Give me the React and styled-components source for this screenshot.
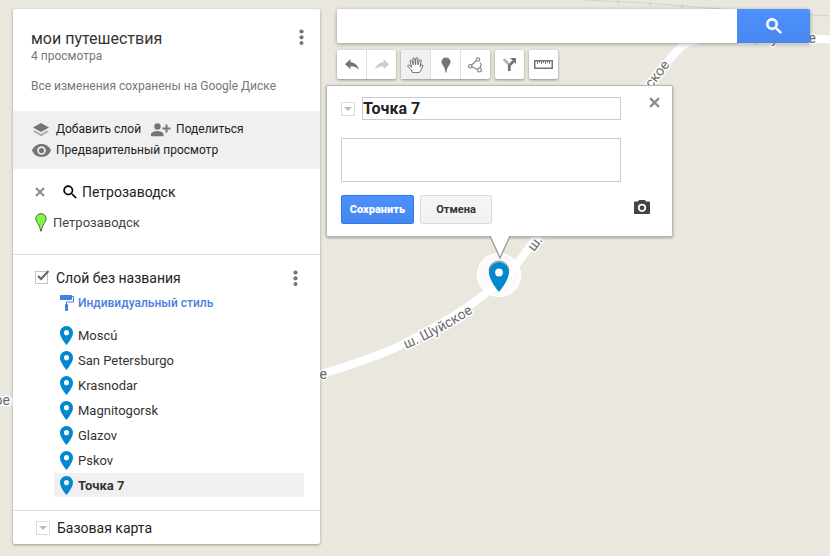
import React, { useState } from "react";
import styled, { createGlobalStyle, css } from "styled-components";

const GlobalStyle = createGlobalStyle`
  * { box-sizing: border-box; }
  body { margin: 0; background: #eae7df; font-family: Roboto, "Noto Sans", sans-serif; color: #222; }
  button, input, textarea { font-family: inherit; margin: 0; }
  button { padding: 0; border: 0; background: none; cursor: pointer; color: inherit; }
  svg { display: block; flex: none; }
`;

const Page = styled.div`
  position: relative;
  display: flex;
  align-items: flex-start;
  gap: 17px;
  min-height: 100vh;
  padding: 9px 20px 12px 13px;
  overflow: hidden;
`;

const MapCanvas = styled.svg`
  position: absolute;
  top: 0;
  left: 0;
`;

const RoadLabel = styled.text`
  font: 14px Roboto, "Noto Sans", sans-serif;
  fill: #6b6b6b;
  stroke: #fff;
  stroke-width: 3px;
  stroke-linejoin: round;
  paint-order: stroke;
`;

const Panel = styled.aside`
  position: relative;
  flex: 0 0 307px;
  background: #fff;
  border-radius: 2px;
  box-shadow: 0 1px 3px rgba(0, 0, 0, 0.35);
`;

const PanelHeader = styled.header`
  display: flex;
  justify-content: space-between;
  align-items: flex-start;
  padding: 20px 12px 18px 18px;
`;

const MapTitle = styled.h1`
  margin: 0;
  font-size: 16px;
  font-weight: 400;
  line-height: 20px;
  color: #333;
`;

const Meta = styled.p`
  margin: 0;
  font-size: 12px;
  line-height: 14px;
  color: #777;
  & + & { margin-top: 16px; }
`;

const MenuButton = styled.button`
  display: grid;
  place-items: center;
  width: 14px;
  height: 16px;
`;

const Actions = styled.div`
  display: flex;
  flex-wrap: wrap;
  column-gap: 10px;
  padding: 8px 18px;
  background: #f0f0f0;
`;

const ActionButton = styled.button`
  display: flex;
  align-items: center;
  gap: 5px;
  height: 21px;
  font-size: 12px;
  line-height: 21px;
  white-space: nowrap;
`;

const IconSlot = styled.span`
  display: grid;
  place-items: center;
  width: 20px;
`;

const Section = styled.section`
  border-bottom: 1px solid #e0e0e0;
  padding: ${(p) => p.$pad};
`;

const Row = styled.div`
  display: flex;
  align-items: center;
  gap: ${(p) => p.$gap}px;
  height: 20px;
`;

const SearchRow = styled(Row)`
  height: 24px;
  margin-bottom: 8px;
`;

const Query = styled.span`
  display: flex;
  align-items: center;
  gap: 5px;
  font-size: 14px;
`;

const ResultName = styled.span`
  font-size: 13px;
  color: #444;
`;

const LayerHead = styled.div`
  display: flex;
  justify-content: space-between;
  align-items: center;
  height: 20px;
  padding-right: 2px;
`;

const LayerLabel = styled.label`
  display: flex;
  align-items: center;
  gap: 7px;
  font-size: 14px;
  line-height: 20px;
`;

const Check = styled.span`
  position: relative;
  display: block;
  width: 14px;
  height: 14px;
  input {
    appearance: none;
    display: block;
    width: 13px;
    height: 13px;
    margin: 0;
    border: 1px solid #c6c6c6;
  }
  svg { position: absolute; left: 1px; top: -1px; pointer-events: none; }
  input:not(:checked) + svg { display: none; }
`;

const StyleButton = styled.button`
  display: flex;
  align-items: center;
  gap: 4px;
  height: 20px;
  margin: 5px 0 10px 25px;
  font-size: 12px;
  font-weight: 500;
  color: #4a80dd;
`;

const PlaceList = styled.ul`
  display: grid;
  gap: 1px;
  margin: 0 0 0 19px;
  padding: 0;
  list-style: none;
`;

const PlaceButton = styled.button`
  display: flex;
  align-items: center;
  gap: 5px;
  width: 100%;
  height: 24px;
  padding-left: 6px;
  font-size: 13px;
  color: #333;
  ${(p) => p.$active && css`
    background: #f0f0f0;
    font-weight: 700;
  `}
`;

const BaseMap = styled.div`
  display: flex;
  align-items: center;
  gap: 7px;
  height: 33px;
  padding-left: 23px;
  font-size: 14px;
`;

const DropButton = styled.button`
  display: grid;
  place-items: center;
  width: 14px;
  height: 14px;
  border: 1px solid #ddd;
`;

const Main = styled.main`
  position: relative;
  flex: 1;
  min-width: 0;
`;

const SearchBar = styled.form`
  display: flex;
  height: 34px;
  border-radius: 2px;
  box-shadow: 0 1px 4px rgba(0, 0, 0, 0.35);
  input {
    flex: 1;
    min-width: 0;
    border: 0;
    padding: 0 10px;
    font-size: 14px;
    background: #fff;
    border-radius: 2px 0 0 2px;
    outline: none;
  }
`;

const SearchButton = styled.button`
  display: grid;
  place-items: center;
  width: 73px;
  border-radius: 0 2px 2px 0;
  background: linear-gradient(#4d90fe, #4787ed);
`;

const Toolbar = styled.div`
  display: flex;
  gap: 5px;
  margin-top: 7px;
`;

const ToolGroup = styled.div`
  display: flex;
  background: #fff;
  border-radius: 2px;
  box-shadow: 0 1px 3px rgba(0, 0, 0, 0.4);
`;

const ToolButton = styled.button`
  display: grid;
  place-items: center;
  width: 29px;
  height: 29px;
  background: ${(p) => (p.$active ? "#f0f0f0" : "transparent")};
  & + & { width: 30px; border-left: 1px solid #e0e0e0; }
`;

const Balloon = styled.form`
  position: absolute;
  top: 85px;
  left: 326px;
  width: 347px;
  display: grid;
  grid-template-columns: 1fr 26px;
  column-gap: 13px;
  padding: 11px 12px 12px 14px;
  background: #fff;
  border: 1px solid #bbb8b1;
  border-radius: 2px;
  box-shadow: 0 1px 3px rgba(0, 0, 0, 0.3);
`;

const BalloonTail = styled.svg`
  position: absolute;
  left: 162px;
  top: 100%;
`;

const NameRow = styled.div`
  display: flex;
  align-items: center;
  gap: 7px;
`;

const NameInput = styled.input`
  flex: 1;
  min-width: 0;
  height: 23px;
  padding: 0;
  border: 1px solid #ccc;
  border-radius: 0;
  font-size: 16px;
  font-weight: 700;
  color: #222;
  outline: none;
`;

const Notes = styled.textarea`
  height: 44px;
  margin: 18px 0 13px;
  padding: 4px;
  border: 1px solid #ccc;
  font-size: 13px;
  resize: none;
  outline: none;
`;

const ButtonRow = styled.div`
  grid-column: 1;
  display: flex;
  gap: 6px;
`;

const FormButton = styled.button`
  height: 29px;
  width: ${(p) => (p.$primary ? 73 : 72)}px;
  border: 1px solid ${(p) => (p.$primary ? "#3079ed" : "#dcdcdc")};
  border-radius: 2px;
  background: ${(p) => (p.$primary ? "linear-gradient(#4d90fe, #4787ed)" : "linear-gradient(#f5f5f5, #f1f1f1)")};
  color: ${(p) => (p.$primary ? "#fff" : "#333")};
  font-size: 11px;
  font-weight: ${(p) => (p.$primary ? 900 : 700)};
`;

const CloseButton = styled.button`
  align-self: start;
  justify-self: end;
`;

const PhotoButton = styled.button`
  align-self: center;
  justify-self: start;
  margin-bottom: 6px;
`;

const MARKER = "M12 2C8.1 2 5 5.1 5 9c0 5.2 7 13 7 13s7-7.800 7-13c0-3.900-3.100-7-7-7zm0 9.700a2.700 2.700 0 1 1 0-5.400 2.700 2.700 0 0 1 0 5.400z";
const LENS = "M15.500 14h-.8l-.3-.3A6.500 6.500 0 1 0 13.700 14.400l.3.3v.8l5 5 1.500-1.500zm-6 0a4.500 4.500 0 1 1 0-9 4.500 4.500 0 0 1 0 9z";

const Pin = () => (
  <svg width="13" height="19" viewBox="5 2 14 20" preserveAspectRatio="none" fill="#0288d1"><path d={MARKER} /></svg>
);
const Lens = ({ size, color, bold }) => (
  <svg width={size} height={size} viewBox="2.500 2.500 18.500 18.500" fill={color} stroke={color} strokeWidth={bold ? 1 : 0.2}><path d={LENS} /></svg>
);
const Cross = ({ size, width }) => (
  <svg width={size} height={size} viewBox="0 0 10 10" stroke="#8c8c8c" strokeWidth={width}><path d="M1 1l8 8M9 1l-8 8" /></svg>
);
const Dots = () => (
  <svg width="5" height="16" fill="#757575"><circle cx="2.500" cy="2.500" r="2.100" /><circle cx="2.500" cy="8.300" r="2.100" /><circle cx="2.500" cy="14" r="2" /></svg>
);
const Caret = () => (
  <svg width="8" height="4" fill="#bbb"><path d="M0 0h8L4 4z" /></svg>
);
const Arrow = ({ flip, color }) => (
  <svg width="14" height="11" viewBox="3 5 18 15" preserveAspectRatio="none" fill={color}>
    <path transform={flip ? "translate(24 0) scale(-1 1)" : undefined} d="M10 9V5l-7 7 7 7v-4.100c5 0 8.500 1.600 11 5.100-1-5-4-10-11-11z" />
  </svg>
);

const LayersIcon = () => (
  <svg width="16" height="14"><path d="M0 8.500l2-1 6 3.500 6-3.500 2 1-8 4.700z" fill="#aaa" /><path d="M8 0l8 4.500L8 9 0 4.500z" fill="#757575" /></svg>
);
const ShareIcon = () => (
  <svg width="20" height="14" fill="#757575"><circle cx="6.500" cy="3.500" r="3.200" /><path d="M0 13.300v-2C0 9 4.300 8 6.300 8s6.200 1 6.200 3.300v2zM14.500 1.500h2v3h3v2h-3v3h-2v-3h-3v-2h3z" /></svg>
);
const EyeIcon = () => (
  <svg width="19" height="13" viewBox="1 4.500 22 15" fill="#757575"><path d="M12 4.500C7 4.500 2.700 7.600 1 12c1.700 4.400 6 7.500 11 7.500s9.300-3.100 11-7.500c-1.700-4.400-6-7.500-11-7.500zM12 17a5 5 0 1 1 0-10 5 5 0 0 1 0 10zm0-8a3 3 0 1 0 0 6 3 3 0 0 0 0-6z" /></svg>
);
const GreenPin = () => (
  <svg width="12" height="19"><path d="M6 .7C3 .7.900 2.900.900 5.600c0 3.900 4.100 5.400 4.600 12.400h1c.5-7 4.600-8.500 4.600-12.400C11.100 2.900 9 .7 6 .7z" fill="#7ef84a" stroke="#3f6b32" strokeWidth="1" /></svg>
);
const RollerIcon = () => (
  <svg width="14" height="16" fill="#3f82e4"><rect width="12" height="5" rx="1" /><path d="M11 1.500h2.500v5.500h-7V9" fill="none" stroke="#3f82e4" /><rect x="5" y="9" width="3" height="7" rx=".8" /></svg>
);
const HandIcon = () => (
  <svg width="17" height="16" viewBox="0 0 17 16" fill="#fff" stroke="#666" strokeWidth="1" strokeLinejoin="round" strokeLinecap="round">
    <path d="M5.500 15.300C4.800 13.200 3.300 12 1 9.600c-.8-1 .3-2 1.300-1.300l2.400 1.900L3.100 4.600c-.3-1.400 1.300-1.800 1.800-.5l1.500 3.700L5.900 2c0-1.400 1.800-1.500 2 0l.6 5.500.5-6c.2-1.300 1.900-1.200 1.900.2l-.1 6.100 1.500-4.300c.5-1.300 2.100-.8 1.900.5l-1.100 5.700 1.100-1.400c.9-1 2.200-.1 1.600 1-1.300 2.300-1.500 4-3.300 6z" />
  </svg>
);
const MarkerIcon = () => (
  <svg width="10" height="16" fill="#757575"><path d="M5 .5a4.500 4.500 0 0 0-4.500 4.500C.500 8 4.200 9.500 4.500 15.500h1C5.800 9.500 9.500 8 9.500 5A4.500 4.500 0 0 0 5 .5z" /></svg>
);
const ShapeIcon = () => (
  <svg width="15" height="16" fill="#fff" stroke="#8c8c8c" strokeWidth="1.200"><path d="M9 3L2.500 9 11 13.300M12 5.500l1.200 2-1.400 4" fill="none" /><circle cx="10" cy="2.500" r="1.700" /><circle cx="2.200" cy="9.300" r="1.700" /><circle cx="11.500" cy="13" r="1.900" /></svg>
);
const RouteIcon = () => (
  <svg width="13" height="13" fill="none" strokeWidth="2.800"><path d="M.8 1.200l5 5" stroke="#b5b5b5" /><path d="M6.300 13V7.500L10.500 3.300" stroke="#757575" /><path d="M7 0h6v6z" fill="#757575" /></svg>
);
const RulerIcon = () => (
  <svg width="19" height="9" fill="none" stroke="#757575"><rect x=".75" y=".75" width="17.500" height="7.500" strokeWidth="1.500" /><path d="M3.500 1v3M5.500 1v2M7.500 1v3M9.500 1v2M11.500 1v3M13.500 1v2M15.500 1v3" /></svg>
);
const CameraIcon = () => (
  <svg width="16" height="14" fill="#444"><path fillRule="evenodd" d="M5.200 0h5.600l1.400 1.500H15c.6 0 1 .4 1 1V13c0 .6-.4 1-1 1H1c-.6 0-1-.4-1-1V2.500c0-.6.4-1 1-1h2.800zM8 3.700a4.100 4.100 0 1 0 0 8.200 4.100 4.100 0 0 0 0-8.200zM8 5.400a2.400 2.400 0 1 1 0 4.800 2.400 2.400 0 0 1 0-4.800z" /></svg>
);

const places = ["Moscú", "San Petersburgo", "Krasnodar", "Magnitogorsk", "Glazov", "Pskov", "Точка 7"];

function StreetMap() {
  return (
    <MapCanvas width="2000" height="1200" aria-hidden="true">
      <path d="M586 0l60 3 74 6 110 7 200 6" fill="none" stroke="#d2d2d2" />
      <path d="M586 0v2M618 0v4M650 2v4M682 4v4M714 7v3" stroke="#c8c8c8" />
      <path d="M-10 404L0 402C80 396 220 402 322 374Q370 359 395 348Q460 316 492 288Q510 274 520 260L600 153Q650 78 682 46Q694 37 730 37L820 39L1000 42" fill="none" stroke="#fff" strokeWidth="8" />
      <path id="road" d="M406 349Q445 332 480 308" fill="none" />
      <RoadLabel><textPath href="#road">ш. Шуйское</textPath></RoadLabel>
      <RoadLabel transform="translate(534 252) rotate(-53)">ш. Шуйское</RoadLabel>
      <RoadLabel textAnchor="end" transform="translate(670 65) rotate(-52)">ш. Шуйское</RoadLabel>
      <RoadLabel textAnchor="end" x="10" y="405">ш. Шуйское</RoadLabel>
      <RoadLabel textAnchor="end" x="327" y="379">ш. Шуйское</RoadLabel>
      <RoadLabel textAnchor="end" x="816" y="43">ш. Шуйское</RoadLabel>
      <circle cx="499" cy="275" r="22" fill="#fff" fillOpacity=".8" />
      <circle cx="499" cy="275" r="21" fill="none" stroke="#fff" strokeWidth="2" />
      <path d="M489 271a10 10 0 0 1 20 0" fill="none" stroke="#888" />
      <svg x="489" y="262" width="20" height="30" viewBox="5 2 14 20" preserveAspectRatio="none" fill="#0288d1"><path d={MARKER} /></svg>
    </MapCanvas>
  );
}

export default function App() {
  const [selected, setSelected] = useState("Точка 7");
  const [name, setName] = useState("Точка 7");
  const stop = (e) => e.preventDefault();

  return (
    <>
      <GlobalStyle />
      <Page>
        <StreetMap />
        <Panel>
          <PanelHeader>
            <div>
              <MapTitle>мои путешествия</MapTitle>
              <Meta>4 просмотра</Meta>
              <Meta>Все изменения сохранены на Google Диске</Meta>
            </div>
            <MenuButton aria-label="Меню карты"><Dots /></MenuButton>
          </PanelHeader>
          <Actions>
            <ActionButton><IconSlot><LayersIcon /></IconSlot>Добавить слой</ActionButton>
            <ActionButton><IconSlot><ShareIcon /></IconSlot>Поделиться</ActionButton>
            <ActionButton><IconSlot><EyeIcon /></IconSlot>Предварительный просмотр</ActionButton>
          </Actions>
          <Section $pad="11px 22px 22px">
            <SearchRow $gap={18}>
              <button aria-label="Убрать результаты"><Cross size={10} width={2} /></button>
              <Query><Lens size={14} color="#000" />Петрозаводск</Query>
            </SearchRow>
            <Row $gap={6}><GreenPin /><ResultName>Петрозаводск</ResultName></Row>
          </Section>
          <Section $pad="13px 16px 13px 22px">
            <LayerHead>
              <LayerLabel>
                <Check>
                  <input type="checkbox" defaultChecked />
                  <svg width="14" height="12"><path d="M2 6l3 3 7.500-8" fill="none" stroke="#666" strokeWidth="2" /></svg>
                </Check>
                Слой без названия
              </LayerLabel>
              <MenuButton aria-label="Меню слоя"><Dots /></MenuButton>
            </LayerHead>
            <StyleButton><RollerIcon />Индивидуальный стиль</StyleButton>
            <PlaceList>
              {places.map((place) => (
                <li key={place}>
                  <PlaceButton $active={place === selected} onClick={() => setSelected(place)}><Pin />{place}</PlaceButton>
                </li>
              ))}
            </PlaceList>
          </Section>
          <BaseMap><DropButton aria-label="Развернуть"><Caret /></DropButton>Базовая карта</BaseMap>
        </Panel>
        <Main>
          <SearchBar onSubmit={stop}>
            <input type="text" aria-label="Поиск" />
            <SearchButton aria-label="Найти"><Lens size={16} color="#fff" bold /></SearchButton>
          </SearchBar>
          <Toolbar>
            <ToolGroup>
              <ToolButton aria-label="Отменить"><Arrow color="#757575" /></ToolButton>
              <ToolButton aria-label="Повторить"><Arrow flip color="#ccc" /></ToolButton>
            </ToolGroup>
            <ToolGroup>
              <ToolButton $active aria-label="Перемещение"><HandIcon /></ToolButton>
              <ToolButton aria-label="Маркер"><MarkerIcon /></ToolButton>
              <ToolButton aria-label="Линия"><ShapeIcon /></ToolButton>
            </ToolGroup>
            <ToolGroup><ToolButton aria-label="Маршрут"><RouteIcon /></ToolButton></ToolGroup>
            <ToolGroup><ToolButton aria-label="Линейка"><RulerIcon /></ToolButton></ToolGroup>
          </Toolbar>
        </Main>
        <Balloon onSubmit={stop}>
          <NameRow>
            <DropButton type="button" aria-label="Стиль"><Caret /></DropButton>
            <NameInput aria-label="Название" value={name} onChange={(e) => setName(e.target.value)} />
          </NameRow>
          <CloseButton type="button" aria-label="Закрыть"><Cross size={11} width={2} /></CloseButton>
          <Notes aria-label="Описание" />
          <ButtonRow>
            <FormButton $primary>Сохранить</FormButton>
            <FormButton type="button">Отмена</FormButton>
          </ButtonRow>
          <PhotoButton type="button" aria-label="Добавить фото"><CameraIcon /></PhotoButton>
          <BalloonTail width="22" height="24"><path d="M1 0l10 22L21 0z" fill="#fff" /><path d="M1 0l10 22L21 0" fill="none" stroke="#999" strokeWidth="1.300" /></BalloonTail>
        </Balloon>
      </Page>
    </>
  );
}
